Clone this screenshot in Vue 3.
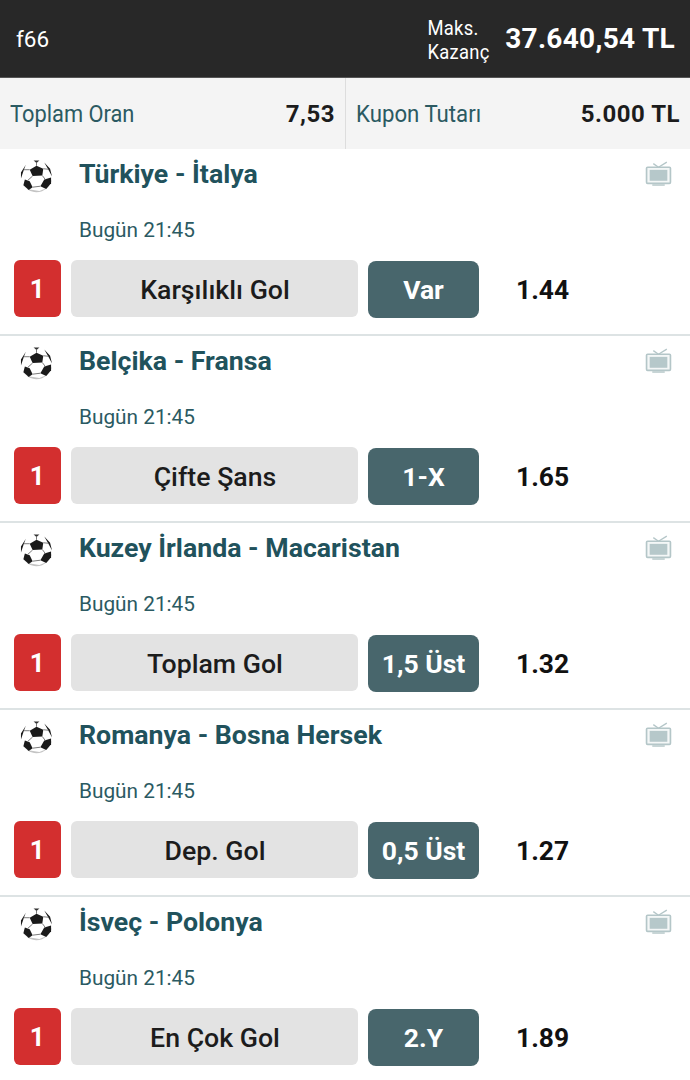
<template>
  <div class="kupon">
    <header class="ust">
      <span class="kullanici">f66</span>
      <div class="kazanc">
        <span class="kazanc-etiket">Maks.<br />Kazanç</span>
        <span class="kazanc-tutar">37.640,54 TL</span>
      </div>
    </header>

    <div class="ozet">
      <div class="ozet-kutu sol">
        <span class="ozet-etiket dar">Toplam Oran</span>
        <span class="ozet-deger">7,53</span>
      </div>
      <div class="ozet-kutu sag">
        <span class="ozet-etiket">Kupon Tutarı</span>
        <span class="ozet-deger">5.000 TL</span>
      </div>
    </div>

    <div v-for="mac in maclar" :key="mac.ad" class="mac">
      <div class="mac-ust">
        <svg class="top" viewBox="0 0 34 34">
          <circle cx="17" cy="17" r="16.5" fill="#fff" />
          <path d="M7 30 A16.5 16.5 0 0 0 33 20 L27 29 L20 32 Z" fill="#c4c4c4" />
          <path d="M17 6 L24 9 L23 16 L13 16.5 L10 10 Z" fill="#1a1a1a" />
          <path d="M25 20 L32 18 L32 24 L27 30 L21 27 Z" fill="#1a1a1a" />
          <path d="M5 20 L10 22 L13 28 L9 31 L3.5 26 Z" fill="#1a1a1a" />
          <path d="M14 0.5 L20 0.5 L17 3 Z" fill="#333" />
          <path d="M25 2.5 L31 9 L33 17 L29 9.5 Z" fill="#1a1a1a" />
          <path d="M6 5 L1 13 L1 19 L4 10 Z" fill="#1a1a1a" />
          <path d="M10 10 L4 10 M13 16.5 L8 21 M23 16 L26 20 M24 9 L29 9.5 M13 28 L21 27 M17 3 L17 6" stroke="#777" stroke-width="1" fill="none" />
        </svg>
        <span class="mac-ad">{{ mac.ad }}</span>
        <svg class="tv" viewBox="0 0 26 26">
          <path d="M13 7 L8 3.5 M13 7 L21 2" stroke="#b4c6c8" stroke-width="1.3" fill="none" />
          <rect x="1.5" y="7" width="23" height="15.5" rx="1" fill="#f4f7f7" stroke="#b4c6c8" stroke-width="1.6" />
          <rect x="4.5" y="9.5" width="17" height="10.5" fill="#b6c8ca" />
          <rect x="7" y="23" width="12" height="2" fill="#c6d4d5" />
        </svg>
      </div>
      <div class="mac-tarih">Bugün 21:45</div>
      <div class="mac-alt">
        <span class="sira">1</span>
        <span class="market">{{ mac.market }}</span>
        <span class="secim">{{ mac.secim }}</span>
        <span class="oran">{{ mac.oran }}</span>
      </div>
    </div>
  </div>
</template>

<script setup>
const maclar = [
  { ad: 'Türkiye - İtalya', market: 'Karşılıklı Gol', secim: 'Var', oran: '1.44' },
  { ad: 'Belçika - Fransa', market: 'Çifte Şans', secim: '1-X', oran: '1.65' },
  { ad: 'Kuzey İrlanda - Macaristan', market: 'Toplam Gol', secim: '1,5 Üst', oran: '1.32' },
  { ad: 'Romanya - Bosna Hersek', market: 'Dep. Gol', secim: '0,5 Üst', oran: '1.27' },
  { ad: 'İsveç - Polonya', market: 'En Çok Gol', secim: '2.Y', oran: '1.89' }
]
</script>

<style>
html,
body {
  margin: 0;
  background: #fff;
  overflow: hidden;
}
</style>

<style scoped>
.kupon {
  width: 690px;
  height: 1080px;
  overflow: hidden;
  font-family: Roboto, "Liberation Sans", sans-serif;
  background: #fff;
}

.ust {
  height: 77px;
  background: #282828;
  border-bottom: 1px solid #555;
  display: flex;
  justify-content: space-between;
  align-items: center;
  padding: 0 15px 0 16px;
  color: #fff;
}

.kullanici {
  font-size: 22.5px;
  margin-top: 1px;
}

.kazanc {
  display: flex;
  align-items: center;
  gap: 16px;
}

.kazanc-etiket {
  font-size: 20px;
  line-height: 24px;
  letter-spacing: 0.3px;
  margin-top: 2px;
  transform: scaleX(0.92);
  transform-origin: right center;
}

.kazanc-tutar {
  font-size: 28px;
  font-weight: 700;
  letter-spacing: 0.3px;
}

.ozet {
  height: 71px;
  display: flex;
  background: #f4f4f4;
}

.ozet-kutu {
  display: flex;
  justify-content: space-between;
  align-items: center;
  box-sizing: border-box;
}

.sol {
  width: 346px;
  padding: 0 10px;
  border-right: 1px solid #ddd;
}

.sag {
  flex: 1;
  padding: 0 10px 0 9.5px;
}

.ozet-etiket {
  font-size: 24px;
  color: #2b5a62;
  margin-top: 1px;
  transform: scaleX(0.925);
  transform-origin: left center;
}

.ozet-etiket.dar {
  transform: scaleX(0.91);
}

.ozet-deger {
  font-size: 24px;
  font-weight: 700;
  color: #1c1c1c;
  letter-spacing: 0.5px;
}

.mac {
  height: 187px;
  box-sizing: border-box;
  border-bottom: 2px solid #dde3e4;
}

.mac-ust {
  height: 50px;
  display: flex;
  align-items: center;
  padding: 0 18px 0 20px;
}

.top {
  width: 33px;
  height: 33px;
  flex: none;
  margin-top: 4px;
}

.mac-ad {
  margin-left: 26px;
  flex: 1;
  font-size: 26.7px;
  font-weight: 700;
  color: #21525c;
}

.tv {
  width: 27px;
  height: 27px;
  flex: none;
  margin-top: -2px;
}

.mac-tarih {
  padding-left: 79px;
  font-size: 20.8px;
  line-height: 28px;
  margin-top: 17px;
  color: #2b5a62;
}

.mac-alt {
  display: flex;
  align-items: center;
  margin-top: 15px;
  padding-left: 13.5px;
}

.sira {
  width: 47.5px;
  height: 57px;
  border-radius: 6px;
  background: #d32f2f;
  color: #fff;
  font-size: 26px;
  font-weight: 700;
  display: flex;
  align-items: center;
  justify-content: center;
}

.market {
  width: 287px;
  height: 57px;
  margin-left: 10px;
  padding: 2px 0 0 1px;
  box-sizing: border-box;
  border-radius: 6px;
  background: #e3e3e3;
  color: #1c1c1c;
  font-size: 26.7px;
  font-weight: 500;
  display: flex;
  align-items: center;
  justify-content: center;
}

.secim {
  width: 111px;
  height: 57px;
  margin-left: 10px;
  margin-top: 2px;
  border-radius: 8px;
  background: #48666c;
  color: #fff;
  font-size: 26.5px;
  font-weight: 700;
  display: flex;
  align-items: center;
  justify-content: center;
}

.oran {
  margin-left: 37px;
  margin-top: 2px;
  font-size: 26.4px;
  font-weight: 700;
  color: #111;
}
</style>
